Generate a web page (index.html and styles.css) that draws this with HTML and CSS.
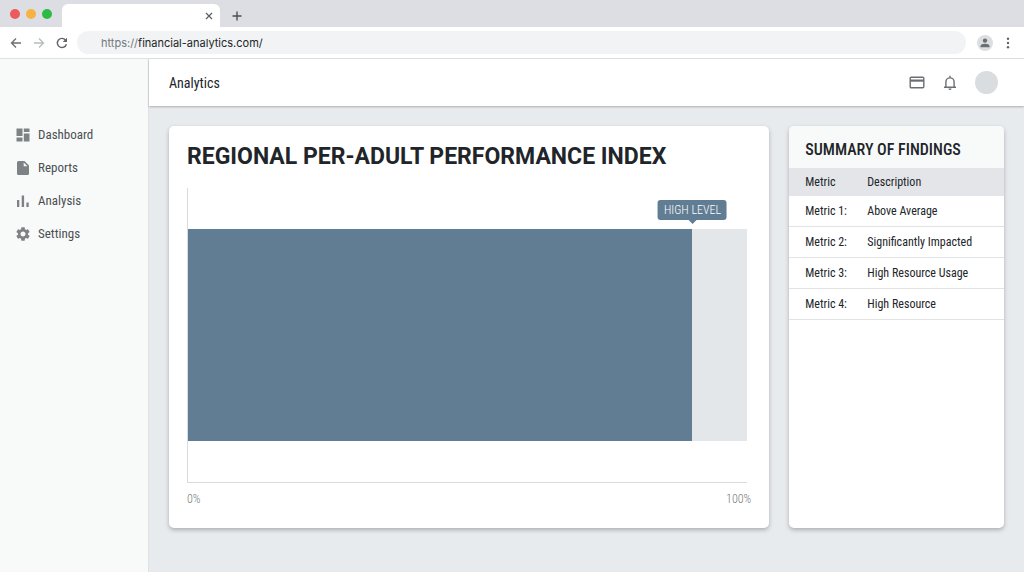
FILE: index.html
```html
<!DOCTYPE html>
<html lang="en">
<head>
<meta charset="utf-8">
<meta name="viewport" content="width=device-width, initial-scale=1">
<title>Analytics</title>
<link rel="stylesheet" href="styles.css">
</head>
<body>
<div class="browser">
  <div class="tab-strip">
    <div class="window-controls">
      <button class="dot dot-close" aria-label="Close window"></button>
      <button class="dot dot-min" aria-label="Minimize window"></button>
      <button class="dot dot-max" aria-label="Maximize window"></button>
    </div>
    <div class="tab">
      <button class="icon-button" aria-label="Close tab"><svg width="8" height="8" viewBox="0 0 8 8"><path d="M1 1l6 6M7 1L1 7" stroke="#5a5e62" stroke-width="1.2" fill="none"/></svg></button>
    </div>
    <button class="icon-button new-tab" aria-label="New tab"><svg width="10" height="10" viewBox="0 0 10 10"><path d="M5 .5v9M.5 5h9" stroke="#4a4e52" stroke-width="1.4" fill="none"/></svg></button>
  </div>
  <div class="toolbar">
    <div class="history">
      <button class="icon-button" aria-label="Back"><svg width="12" height="12" viewBox="0 0 12 12" fill="none" stroke="#6b6f73" stroke-width="1.3"><path d="M11 6H1.500M6 1.500L1.500 6L6 10.500"/></svg></button>
      <button class="icon-button" aria-label="Forward"><svg width="12" height="12" viewBox="0 0 12 12" fill="none" stroke="#b8bcbf" stroke-width="1.300"><path d="M1 6h9.500M6 1.500L10.500 6L6 10.500"/></svg></button>
      <button class="icon-button" aria-label="Reload"><svg width="12" height="12" viewBox="0 0 12 12"><path d="M9.600 3.100A4.600 4.600 0 1 0 10.400 7.200" fill="none" stroke="#5f6368" stroke-width="1.400"/><path d="M11 .7v4.300H6.700z" fill="#5f6368"/></svg></button>
    </div>
    <label class="address">
      <span class="scheme">https://</span><input class="url" type="text" value="financial-analytics.com/" aria-label="Address">
    </label>
    <button class="profile" aria-label="Profile"><svg width="10" height="10" viewBox="0 0 10 10" fill="#6b6f72"><circle cx="5" cy="2.600" r="2.200"/><path d="M.5 9.300V8.300C.5 6.500 2.800 5.800 5 5.800s4.500.7 4.500 2.500v1z"/></svg></button>
    <button class="icon-button" aria-label="Menu"><svg width="4" height="12" viewBox="0 0 4 12" fill="#5f6368"><circle cx="2" cy="1.700" r="1.200"/><circle cx="2" cy="6" r="1.200"/><circle cx="2" cy="10.300" r="1.200"/></svg></button>
  </div>
  <div class="app">
    <nav class="sidebar" aria-label="Main">
      <a class="nav-link" href="#dashboard"><svg width="14" height="14" viewBox="0 0 14 14" fill="#7e8284"><path d="M.5.5h6v7.500h-6zM7.800.5h5.700v3.500H7.800zM.5 9.500h6v4h-6zM7.800 5.500h5.700v8H7.800z"/></svg>Dashboard</a>
      <a class="nav-link" href="#reports"><svg width="14" height="14" viewBox="0 0 14 14"><path d="M2.500 0h6L13 4.500v8A1.500 1.500 0 0 1 11.500 14h-9A1.500 1.500 0 0 1 1 12.500v-11A1.500 1.500 0 0 1 2.500 0z" fill="#7e8284"/><path d="M7.700 1.500v3.700h3.700z" fill="#f8faf9"/></svg>Reports</a>
      <a class="nav-link" href="#analysis"><svg width="14" height="14" viewBox="0 0 14 14" fill="#7e8284"><path d="M1 6h2.300v7H1zM5.700 1.500h2.400V13H5.700zM10.400 8.500h2.300V13h-2.300z"/></svg>Analysis</a>
      <a class="nav-link" href="#settings"><svg width="14" height="14" viewBox="2 2 20 20" fill="#7e8284"><path d="M19.140 12.940c.04-.3.060-.610.060-.940 0-.320-.020-.640-.070-.940l2.030-1.580c.18-.14.230-.410.120-.610l-1.920-3.320c-.12-.220-.370-.290-.590-.220l-2.390.960c-.5-.380-1.030-.7-1.620-.940L14.400 2.810c-.040-.240-.240-.410-.480-.410h-3.840c-.240 0-.430.170-.470.410L9.250 5.350c-.590.240-1.130.570-1.620.940l-2.390-.960c-.220-.080-.470 0-.590.220L2.740 8.870c-.12.210-.080.470.12.610l2.030 1.580c-.05.300-.090.630-.090.940s.020.640.070.940l-2.030 1.580c-.18.140-.230.410-.12.610l1.920 3.320c.12.220.370.290.590.220l2.390-.960c.5.380 1.030.7 1.620.940l.360 2.540c.05.240.240.410.480.410h3.840c.240 0 .440-.170.470-.410l.360-2.540c.590-.240 1.130-.560 1.620-.940l2.390.960c.220.080.470 0 .590-.220l1.920-3.320c.12-.220.070-.470-.12-.610zM12 15.600c-1.980 0-3.600-1.620-3.600-3.600s1.620-3.600 3.600-3.600 3.600 1.620 3.600 3.600-1.620 3.600-3.600 3.600z"/></svg>Settings</a>
    </nav>
    <div class="page">
      <header class="app-bar">
        <h1 class="app-title">Analytics</h1>
        <button class="icon-button" aria-label="Billing"><svg width="16" height="14" viewBox="0 0 16 14"><rect x="1.200" y="1.200" width="13.600" height="10.600" rx="1" fill="none" stroke="#6b6f73" stroke-width="1.400"/><path d="M1 3.500h14v2.200H1z" fill="#6b6f73"/></svg></button>
        <button class="icon-button" aria-label="Notifications"><svg width="14" height="16" viewBox="0 0 14 16"><path d="M1 12.200h12M2.900 12V7a4.100 4.100 0 0 1 8.200 0v5M7 2.700V.8" fill="none" stroke="#6b6f73" stroke-width="1.400"/><path d="M5.500 13.600h3a1.500 1.500 0 0 1-3 0z" fill="#6b6f73"/></svg></button>
        <button class="avatar" aria-label="Account"></button>
      </header>
      <main class="content">
        <section class="card chart-card">
          <h2 class="chart-title">REGIONAL PER-ADULT PERFORMANCE INDEX</h2>
          <div class="plot">
            <div class="track">
              <div class="fill" style="width: 90.2%"><span class="callout">HIGH LEVEL</span></div>
            </div>
          </div>
          <div class="scale"><span>0%</span><span>100%</span></div>
        </section>
        <section class="card">
          <h2 class="summary-title">SUMMARY OF FINDINGS</h2>
          <table class="findings">
            <thead><tr><th scope="col">Metric</th><th scope="col">Description</th></tr></thead>
            <tbody>
              <tr><td>Metric 1:</td><td>Above Average</td></tr>
              <tr><td>Metric 2:</td><td>Significantly Impacted</td></tr>
              <tr><td>Metric 3:</td><td>High Resource Usage</td></tr>
              <tr><td>Metric 4:</td><td>High Resource</td></tr>
            </tbody>
          </table>
        </section>
      </main>
    </div>
  </div>
</div>
</body>
</html>
```
FILE: styles.css
```css
* { box-sizing: border-box; }
body {
  margin: 0;
  font-family: "Roboto Condensed", Roboto, "Liberation Sans", sans-serif;
  font-size: 12px;
  line-height: 16px;
  color: #212529;
}
button { padding: 0; border: 0; background: none; }
svg { display: block; }
h1, h2 { margin: 0; }
.icon-button { display: flex; align-items: center; justify-content: center; }

.browser { display: flex; flex-direction: column; min-height: 100vh; }
.tab-strip { display: flex; height: 27px; padding-left: 10px; background: #dcdee4; }
.window-controls { display: flex; align-items: center; gap: 6px; width: 52px; }
.dot { width: 10px; height: 10px; border-radius: 50%; }
.dot-close { background: #eb5a5c; }
.dot-min { background: #f6b343; }
.dot-max { background: #2dbb45; }
.tab {
  display: flex;
  align-items: center;
  justify-content: flex-end;
  width: 158px;
  margin-top: 4px;
  padding-right: 7px;
  border-radius: 6px 6px 0 0;
  background: #fff;
}
.new-tab { margin: 4px 0 0 12px; }

.toolbar {
  display: flex;
  align-items: center;
  height: 32px;
  padding: 0 14px 0 10px;
  border-bottom: 1px solid #dfe1e3;
  background: #fff;
}
.history { display: flex; gap: 11px; margin-right: 9px; }
.address {
  display: flex;
  flex: 1;
  align-items: center;
  height: 23px;
  padding: 0 24px;
  border-radius: 12px;
  background: #f1f3f4;
  font-family: Inter, Roboto, "Liberation Sans", sans-serif;
  font-size: 11px;
}
.scheme { color: #74787c; }
.url { flex: 1; min-width: 0; padding: 0; border: 0; background: none; color: #212529; font: inherit; }
.profile {
  display: flex;
  align-items: center;
  justify-content: center;
  width: 16px;
  height: 16px;
  margin: 0 13px 0 11px;
  border-radius: 50%;
  background: #dcdfe1;
}

.app { display: flex; flex: 1; }
.sidebar {
  display: flex;
  flex: none;
  flex-direction: column;
  gap: 17px;
  width: 149px;
  padding: 68px 16px 0;
  border-right: 1px solid #dfe2e4;
  background: #f8faf9;
}
.nav-link { display: flex; align-items: center; gap: 8px; color: #4b4f53; font-size: 13px; text-decoration: none; }
.page { display: flex; flex: 1; flex-direction: column; min-width: 0; background: #e8ebee; }
.app-bar {
  display: flex;
  align-items: center;
  gap: 18px;
  height: 47px;
  padding: 0 26px 0 20px;
  background: #fff;
  box-shadow: 0 1px 2px rgba(60, 64, 67, .35);
}
.app-title { flex: 1; font-size: 14px; font-weight: 400; }
.avatar { width: 23px; height: 23px; border-radius: 50%; background: #dadddf; }

.content {
  display: grid;
  flex: 1;
  grid-template-columns: minmax(0, 601fr) minmax(0, 215fr);
  gap: 20px;
  padding: 20px 20px 44px;
}
.card { overflow: hidden; border-radius: 5px; background: #fff; box-shadow: 0 2px 4px rgba(60, 64, 67, .35); }
.chart-card { display: flex; flex-direction: column; padding: 17px 22px 21px 18px; }
.chart-title { font-family: Roboto, "Liberation Sans", sans-serif; font-size: 23px; line-height: 28px; font-weight: 700; }
.plot { flex: 1; margin-top: 17px; padding: 41px 0; border-left: 1px solid #d8dbdd; border-bottom: 1px solid #d8dbdd; }
.track { height: 100%; background: #e3e7ea; }
.fill { position: relative; height: 100%; background: #617d93; }
.callout {
  position: absolute;
  right: 0;
  bottom: 100%;
  transform: translateX(50%);
  margin-bottom: 9px;
  padding: 2px 6px;
  border-radius: 3px;
  background: #617d93;
  color: #fff;
  font-size: 12px;
  font-weight: 300;
  white-space: nowrap;
}
.callout::after {
  content: "";
  position: absolute;
  top: 100%;
  left: 50%;
  margin-left: -4px;
  border: 4px solid transparent;
  border-top-color: #617d93;
  border-bottom: 0;
}
.scale { display: flex; justify-content: space-between; margin: 8px -4px 0 0; color: #74787b; font-size: 12px; font-weight: 300; }

.summary-title { padding: 16px 16px 10px; background: #f8faf9; font-size: 16px; line-height: 16px; font-weight: 500; }
.findings { width: 100%; border-collapse: collapse; }
.findings th { padding: 6px 0; background: #e3e5e9; font-weight: 400; text-align: left; }
.findings td { padding: 8px 0 7px; border-bottom: 1px solid #e1e3e5; line-height: 15px; }
.findings th:first-child, .findings td:first-child { width: 78px; padding-left: 16px; }
```
